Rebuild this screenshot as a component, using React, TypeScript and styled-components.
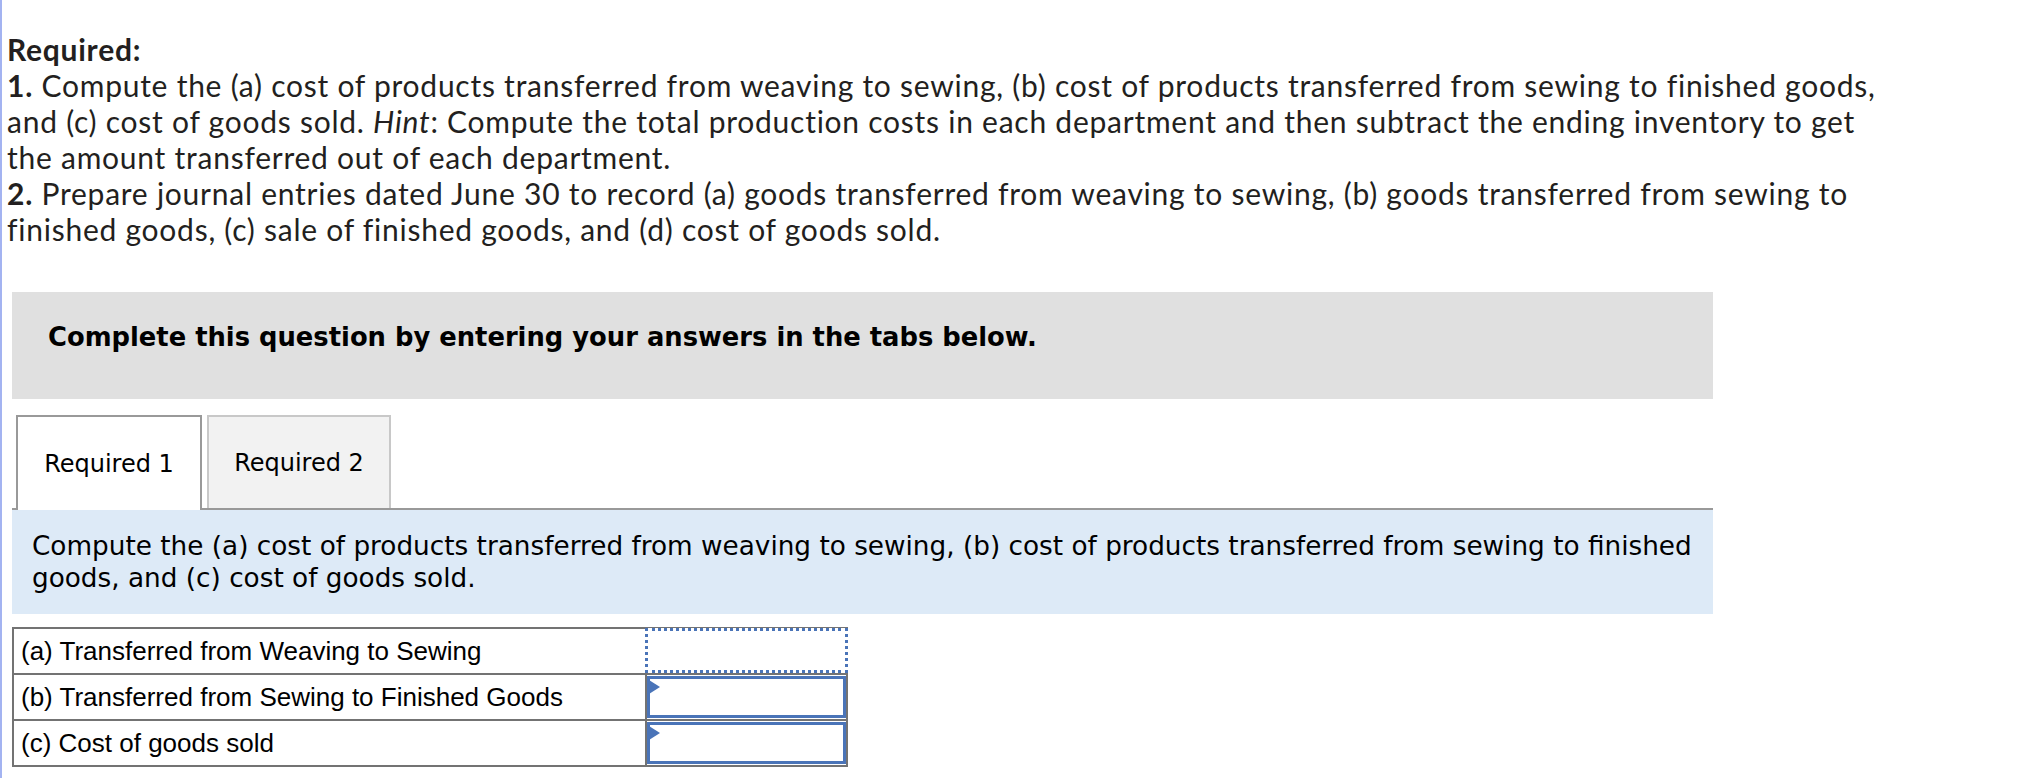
import React from "react";
import styled, { createGlobalStyle } from "styled-components";

const GlobalStyle = createGlobalStyle`
  html, body { margin: 0; padding: 0; background: #ffffff; }
  * { box-sizing: border-box; }
`;

const Page = styled.div`
  min-height: 778px;
  border-left: 2px solid #a3b3f1;
  padding: 31px 0 0 5px;
`;

const Prose = styled.div`
  font-family: Lato, "Open Sans", sans-serif;
  font-size: 30px;
  letter-spacing: 0.75px;
  line-height: 36px;
  color: #231f20;
  width: 2000px;
`;

const Strong = styled.b`
  font-weight: 700;
`;

const Em = styled.i`
  font-style: italic;
`;

const Panel = styled.div`
  margin: 45px 0 0 5px;
  width: 1701px;
`;

const Banner = styled.div`
  background: #e0e0e0;
  height: 107px;
  padding: 30px 0 0 36px;
  font-family: "DejaVu Sans", Verdana, sans-serif;
  font-weight: 700;
  font-size: 25.8px;
  color: #000;
`;

const TabBar = styled.div`
  display: flex;
  align-items: flex-end;
  gap: 5px;
  margin-top: 16px;
  padding-left: 4px;
  border-bottom: 2px solid #999999;
`;

const Tab = styled.div<{ $active?: boolean }>`
  width: ${(p) => (p.$active ? "186px" : "184px")};
  height: ${(p) => (p.$active ? "95px" : "93px")};
  margin-bottom: ${(p) => (p.$active ? "-2px" : "0")};
  display: flex;
  align-items: center;
  justify-content: center;
  font-family: "DejaVu Sans", Verdana, sans-serif;
  font-size: 24px;
  color: #000;
  background: ${(p) => (p.$active ? "#ffffff" : "#f2f2f2")};
  border: 2px solid ${(p) => (p.$active ? "#999999" : "#c8c8c8")};
  border-bottom: 0;
`;

const Instructions = styled.div`
  background: #ddeaf7;
  height: 104px;
  padding: 20px 20px 0 20px;
  font-family: "DejaVu Sans", Verdana, sans-serif;
  font-size: 26.3px;
  line-height: 32px;
  color: #000;
`;

const Table = styled.table`
  margin-top: 13px;
  border-collapse: collapse;
  width: 836px;
  font-family: "Liberation Sans", Arial, sans-serif;
  font-size: 26px;
  color: #000;
`;

const Row = styled.tr`
  height: 46px;
`;

const Label = styled.td`
  border: 2px solid #737373;
  padding: 0 0 0 7px;
  width: 633px;
  vertical-align: middle;
`;

const InputCell = styled.td`
  border: 2px solid #737373;
  padding: 0;
  height: 46px;
`;

const Field = styled.div<{ $focused?: boolean }>`
  position: relative;
  margin: ${(p) => (p.$focused ? "-2px -2px -1px -2px" : "0")};
  height: ${(p) => (p.$focused ? "45px" : "42px")};
  border: 3px ${(p) => (p.$focused ? "dotted" : "solid")} #4a74b8;
  background: #ffffff;
  &::before {
    content: "";
    display: ${(p) => (p.$focused ? "none" : "block")};
    position: absolute;
    left: -1px;
    top: 1px;
    width: 0;
    height: 0;
    border-top: 7px solid transparent;
    border-bottom: 7px solid transparent;
    border-left: 11px solid #4a74b8;
  }
`;

const FieldInput = styled.input`
  width: 100%;
  height: 100%;
  border: none;
  outline: none;
  background: transparent;
  font-family: "Liberation Sans", Arial, sans-serif;
  font-size: 22px;
`;

const rows = [
  "(a) Transferred from Weaving to Sewing",
  "(b) Transferred from Sewing to Finished Goods",
  "(c) Cost of goods sold",
];

export default function App() {
  return (
    <>
      <GlobalStyle />
      <Page>
        <Prose>
          <Strong>Required:</Strong>
          <br />
          <Strong>1.</Strong> Compute the (a) cost of products transferred from weaving to sewing, (b) cost of products
          transferred from sewing to finished goods,
          <br />
          and (c) cost of goods sold. <Em>Hint</Em>: Compute the total production costs in each department and then
          subtract the ending inventory to get
          <br />
          the amount transferred out of each department.
          <br />
          <Strong>2.</Strong> Prepare journal entries dated June 30 to record (a) goods transferred from weaving to
          sewing, (b) goods transferred from sewing to
          <br />
          finished goods, (c) sale of finished goods, and (d) cost of goods sold.
        </Prose>
        <Panel>
          <Banner>Complete this question by entering your answers in the tabs below.</Banner>
          <TabBar>
            <Tab $active>Required 1</Tab>
            <Tab>Required 2</Tab>
          </TabBar>
          <Instructions>
            Compute the (a) cost of products transferred from weaving to sewing, (b) cost of products transferred from
            sewing to finished goods, and (c) cost of goods sold.
          </Instructions>
          <Table>
            <tbody>
              {rows.map((r, i) => (
                <Row key={r}>
                  <Label>{r}</Label>
                  <InputCell>
                    <Field $focused={i === 0}>
                      <FieldInput type="text" aria-label={r} />
                    </Field>
                  </InputCell>
                </Row>
              ))}
            </tbody>
          </Table>
        </Panel>
      </Page>
    </>
  );
}
